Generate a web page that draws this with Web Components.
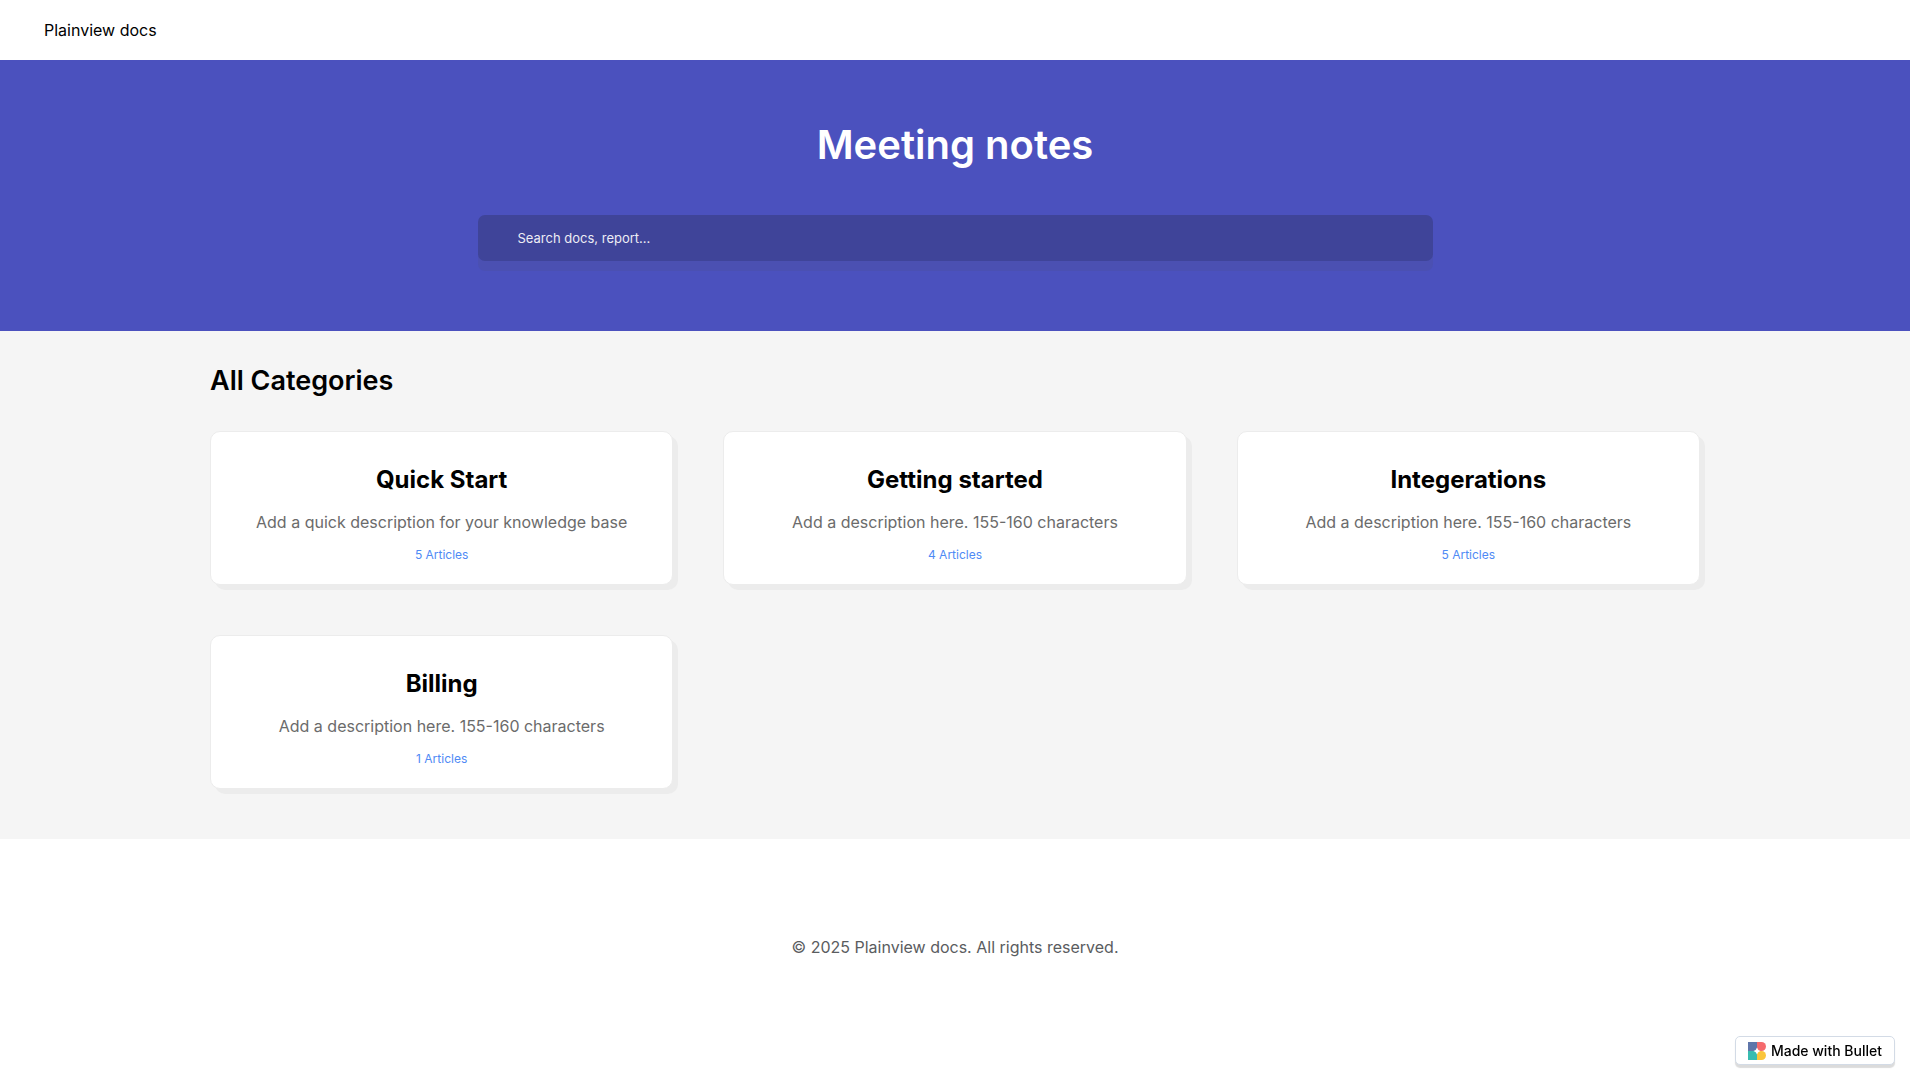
<!DOCTYPE html>
<html lang="en">
<head>
  <meta charset="UTF-8">
  <title>Plainview docs</title>
  <style>
    body {
      margin: 0;
      padding-right: 10px;
      background: #fff;
      color: #000;
      font-family: Inter, "Liberation Sans", sans-serif;
      font-size: 16px;
      line-height: 24px;
    }
  </style>
</head>
<body>

<docs-header>Plainview docs</docs-header>

<docs-hero placeholder="Search docs, report...">Meeting notes</docs-hero>

<category-list heading="All Categories">
  <category-card name="Quick Start" articles="5">Add a quick description for your knowledge base</category-card>
  <category-card name="Getting started" articles="4">Add a description here. 155-160 characters</category-card>
  <category-card name="Integerations" articles="5">Add a description here. 155-160 characters</category-card>
  <category-card name="Billing" articles="1">Add a description here. 155-160 characters</category-card>
</category-list>

<docs-footer>© 2025 Plainview docs. All rights reserved.</docs-footer>

<made-with-badge>Made with Bullet</made-with-badge>

<script>
  // Top bar with the site name
  class DocsHeader extends HTMLElement {
    constructor() {
      super();
      this.attachShadow({ mode: 'open' }).innerHTML = `
        <style>
          :host {
            display: block;
            background: #fff;
          }
          nav {
            display: flex;
            align-items: center;
            padding: 18px 44px;
          }
          a {
            color: inherit;
            text-decoration: none;
          }
        </style>
        <nav><a href="#"><slot></slot></a></nav>
      `;
    }
  }

  // Coloured banner with the page title and the search box
  class DocsHero extends HTMLElement {
    constructor() {
      super();
      this.attachShadow({ mode: 'open' }).innerHTML = `
        <style>
          :host {
            display: flex;
            flex-direction: column;
            align-items: center;
            gap: 40px;
            padding: 55px 24px 70px;
            background: #4b51be;
            color: #fff;
          }
          h1 {
            margin: 0;
            font-size: 40px;
            font-weight: 600;
            line-height: 60px;
          }
          input {
            box-sizing: border-box;
            width: 50vw;
            max-width: 955px;
            height: 46px;
            padding: 0 40px;
            border: 0;
            border-radius: 7px;
            background: #3f4499;
            box-shadow: 0 10px 0 rgba(75, 80, 153, 0.3);
            color: #fff;
            font: 13px/20px Inter, "Liberation Sans", sans-serif;
            outline: none;
          }
          input::placeholder {
            color: #fff;
            opacity: 0.9;
          }
        </style>
        <h1><slot></slot></h1>
        <input type="search" aria-label="Search">
      `;
      this.shadowRoot.querySelector('input').placeholder = this.getAttribute('placeholder') || '';
    }
  }

  // Grey section that lays the cards out in three columns
  class CategoryList extends HTMLElement {
    constructor() {
      super();
      this.attachShadow({ mode: 'open' }).innerHTML = `
        <style>
          :host {
            display: block;
            padding: 32px 24px 50px;
            background: #f5f5f5;
          }
          section {
            max-width: 1490px;
            margin: 0 auto;
          }
          h2 {
            margin: 0 0 32px;
            font-size: 27px;
            font-weight: 600;
            line-height: 36px;
          }
          .grid {
            display: grid;
            grid-template-columns: repeat(3, 1fr);
            gap: 50px;
          }
        </style>
        <section>
          <h2></h2>
          <div class="grid"><slot></slot></div>
        </section>
      `;
      this.shadowRoot.querySelector('h2').textContent = this.getAttribute('heading');
    }
  }

  // Single category card
  class CategoryCard extends HTMLElement {
    constructor() {
      super();
      this.attachShadow({ mode: 'open' }).innerHTML = `
        <style>
          :host {
            display: block;
          }
          .card {
            display: block;
            padding: 32px 24px 17px;
            border: 1px solid #ececec;
            border-radius: 10px;
            background: #fff;
            box-shadow: 5px 5px 0 #ececec;
            color: inherit;
            text-align: center;
            text-decoration: none;
          }
          h3 {
            margin: 0 0 14px;
            font-size: 24px;
            font-weight: 700;
            line-height: 32px;
          }
          p {
            margin: 0;
            color: #6b6b6b;
          }
          .count {
            margin-top: 9px;
            color: #4f8af5;
            font-size: 12px;
          }
        </style>
        <a class="card" href="#">
          <h3></h3>
          <p><slot></slot></p>
          <p class="count"></p>
        </a>
      `;
      this.shadowRoot.querySelector('h3').textContent = this.getAttribute('name');
      this.shadowRoot.querySelector('.count').textContent = this.getAttribute('articles') + ' Articles';
    }
  }

  // Copyright line
  class DocsFooter extends HTMLElement {
    constructor() {
      super();
      this.attachShadow({ mode: 'open' }).innerHTML = `
        <style>
          :host {
            display: block;
            padding: 96px 24px;
            color: #5a5c60;
            text-align: center;
          }
        </style>
        <footer><slot></slot></footer>
      `;
    }
  }

  // Badge that floats over the bottom right corner
  class MadeWithBadge extends HTMLElement {
    constructor() {
      super();
      this.attachShadow({ mode: 'open' }).innerHTML = `
        <style>
          :host {
            position: fixed;
            right: 25px;
            bottom: 15px;
          }
          a {
            display: flex;
            align-items: center;
            gap: 5px;
            padding: 4px 12px 3px;
            border: 1px solid #d3dbe6;
            border-radius: 5px;
            background: #fff;
            box-shadow: 0 3px 1px rgba(0, 0, 0, 0.14);
            color: #000;
            font-size: 14px;
            font-weight: 500;
            line-height: 20px;
            text-decoration: none;
          }
          svg {
            display: block;
          }
        </style>
        <a href="#">
          <svg width="18" height="18" viewBox="0 0 18 18" aria-hidden="true">
            <path fill="#5f76aa" d="M0 0h9v9H0z"/>
            <path fill="#f56a6d" d="M9 0h4.500a4.500 4.500 0 0 1 0 9H9z"/>
            <path fill="#38bcb0" d="M0 9h9v9H0z"/>
            <path fill="#fac53c" d="M9 9h4.500a4.500 4.500 0 0 1 0 9H9z"/>
            <path fill="#fff" d="M9 5.500q.7 2.800 3.500 3.500-2.800.7-3.500 3.500-.7-2.800-3.500-3.500 2.800-.7 3.500-3.500z"/>
          </svg>
          <slot></slot>
        </a>
      `;
    }
  }

  customElements.define('docs-header', DocsHeader);
  customElements.define('docs-hero', DocsHero);
  customElements.define('category-list', CategoryList);
  customElements.define('category-card', CategoryCard);
  customElements.define('docs-footer', DocsFooter);
  customElements.define('made-with-badge', MadeWithBadge);
</script>

</body>
</html>
